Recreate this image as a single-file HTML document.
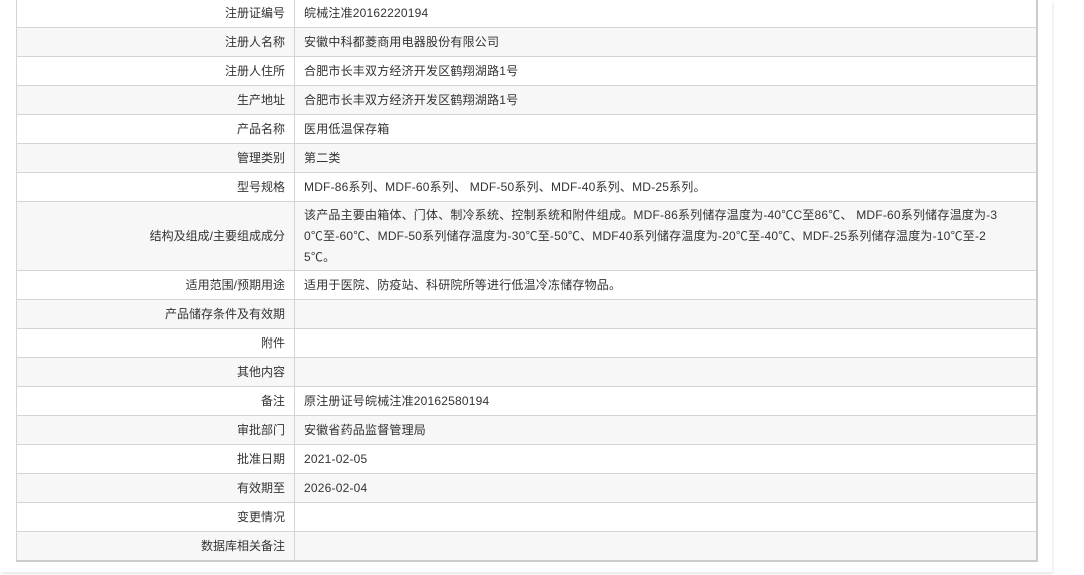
<!DOCTYPE html>
<html><head><meta charset="utf-8"><style>
html,body{margin:0;padding:0;background:#fff;width:1084px;height:575px;overflow:hidden}
.wrap{position:absolute;left:0;top:0;width:1052px;height:572px;background:#fff;box-shadow:1px 2px 3px #e8e8e8}
table{position:absolute;left:16px;top:-2px;width:1022px;border-collapse:collapse;font-family:"Liberation Sans","Noto Sans CJK SC",sans-serif;font-size:12px;color:#333}
td{border:1px solid #d4d4d4;height:28px;padding:0 9px;line-height:18px;letter-spacing:0.2px}
td.l{width:259px;text-align:right;padding-right:9px;letter-spacing:0}
tr:nth-child(even) td{background:#f7f7f7}
table{border-bottom:2px solid #ccc;border-right:2px solid #ccc}
</style></head><body><div class="wrap">
<table>
<tr><td class="l">注册证编号</td><td>皖械注准20162220194</td></tr>
<tr><td class="l">注册人名称</td><td>安徽中科都菱商用电器股份有限公司</td></tr>
<tr><td class="l">注册人住所</td><td>合肥市长丰双方经济开发区鹤翔湖路1号</td></tr>
<tr><td class="l">生产地址</td><td>合肥市长丰双方经济开发区鹤翔湖路1号</td></tr>
<tr><td class="l">产品名称</td><td>医用低温保存箱</td></tr>
<tr><td class="l">管理类别</td><td>第二类</td></tr>
<tr><td class="l">型号规格</td><td>MDF-86系列、MDF-60系列、 MDF-50系列、MDF-40系列、MD-25系列。</td></tr>
<tr><td class="l" style="height:68px">结构及组成/主要组成成分</td><td style="padding-top:1px;padding-bottom:1px;line-height:21px">该产品主要由箱体、门体、制冷系统、控制系统和附件组成。MDF-86系列储存温度为-40℃C至86℃、 MDF-60系列储存温度为-3<br>0℃至-60℃、MDF-50系列储存温度为-30℃至-50℃、MDF40系列储存温度为-20℃至-40℃、MDF-25系列储存温度为-10℃至-2<br>5℃。</td></tr>
<tr><td class="l">适用范围/预期用途</td><td>适用于医院、防疫站、科研院所等进行低温冷冻储存物品。</td></tr>
<tr><td class="l">产品储存条件及有效期</td><td></td></tr>
<tr><td class="l">附件</td><td></td></tr>
<tr><td class="l">其他内容</td><td></td></tr>
<tr><td class="l">备注</td><td>原注册证号皖械注准20162580194</td></tr>
<tr><td class="l">审批部门</td><td>安徽省药品监督管理局</td></tr>
<tr><td class="l">批准日期</td><td>2021-02-05</td></tr>
<tr><td class="l">有效期至</td><td>2026-02-04</td></tr>
<tr><td class="l">变更情况</td><td></td></tr>
<tr><td class="l">数据库相关备注</td><td></td></tr>
</table></div></body></html>
